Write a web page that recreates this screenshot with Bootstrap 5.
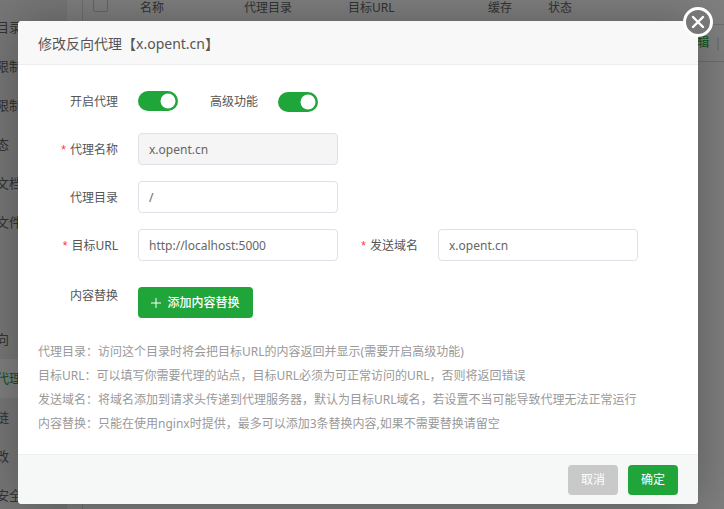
<!DOCTYPE html>
<html lang="zh">
<head>
<meta charset="utf-8">
<title>修改反向代理</title>
<link rel="stylesheet" href="https://cdn.jsdelivr.net/npm/bootstrap@5.3.0/dist/css/bootstrap.min.css">
<style>
html,body{height:509px;overflow:hidden;background:#fff}
body{font:12px/1.5 "Noto Sans","Noto Sans CJK SC",sans-serif;color:#666}
.page-shell{height:509px;overflow:hidden}
.side-menu{width:97px;margin-left:-30px;padding-top:8px;background:#eee;flex:none;font-size:13px}
.side-item{height:39px;line-height:39px;white-space:nowrap}
.side-item.on{background:#fff;color:#20a53a}
.side-band{width:16px;flex:none;background:#fff;border-right:1px solid #ddd}
.site-table{table-layout:fixed;width:641px;margin:-8px 0 0;color:#666;--bs-table-bg:transparent}
.site-table td,.site-table th{font-weight:400;padding:0 0 0 10px;vertical-align:middle;border-bottom:1px solid #ddd;white-space:nowrap;overflow:hidden}
.site-table thead th{height:32px}
.site-table tbody td{height:37px}
.fake-check{display:block;width:15px;height:15px;border:1px solid #ccc;border-radius:2px;margin-top:-6px}
.row-ops{color:#20a53a;text-align:right;padding-right:3px!important}
.ops-sep{color:#ccc;margin-left:2px}
.veil{background:rgba(0,0,0,.5);z-index:10}
.dlg{left:18px;top:21px;width:680px;height:483px;z-index:20;background:#fff;border:0;border-radius:4px;box-shadow:1px 1px 50px rgba(0,0,0,.3)}
.dlg .modal-header{height:44px;flex:none;padding:0 20px;background:#f8f8f8;border-bottom:1px solid #eee;border-radius:4px 4px 0 0}
.dlg-title{font-size:14px;font-weight:400;color:#555;margin:0;line-height:1.5;position:relative;top:1px}
.dlg .modal-body{padding:20px 0 0}
.dlg .modal-footer{height:50px;flex:none;padding:0 20px 0 0;background:#f6f8f8;border-top:1px solid #eee;border-radius:0 0 4px 4px;gap:10px}
.dlg .modal-footer>*{margin:0}
.f-row{margin-bottom:16px;min-height:32px}
.f-label{width:100px;flex:none;text-align:right;color:#555;margin-right:20px;line-height:18px;padding-top:2px}
.f-label.next{width:80px;margin-right:20px}
.add-row .f-label{padding-top:0}
.req{color:#f33;margin-right:4px;font-family:"Liberation Sans",sans-serif}
.f-input{width:200px;height:32px;font-size:12px;line-height:32px;padding:2px 10px 0;color:#666;border:1px solid #e0e0e8;border-radius:4px;box-shadow:none;font-family:inherit}
.f-input:disabled,.f-input[readonly]{background:#f5f5f5}
.f-switch{padding:0;margin:0;min-height:0;display:flex}
.f-switch.lower{margin-top:2px}
.f-switch .form-check-input{width:40px;height:20px;margin:0;float:none;background-color:#20a53a;border:0;border-radius:10px}
.btn-bt{background:#20a53a;color:#fff;border:0;border-radius:4px;font-size:12px;line-height:1}
.btn-bt:hover{background:#20a53a;color:#fff}
.btn-add{width:115px;height:31px;padding:0;gap:6px;font-weight:500}
.add-row{margin-top:26px}
.btn-dlg{width:50px;height:30px;padding:0}
.btn-mute{background:#c9c9c9}
.btn-mute:hover{background:#c9c9c9}
.tips{margin:22px 0 0 20px;padding:0;list-style:none;color:#999}
.tips li{line-height:24px;white-space:nowrap}
.close-x{left:683px;top:7px;width:30px;height:30px;z-index:30;padding:0;border:0;background:none}
</style>
</head>
<body>
<div class="page-shell d-flex position-relative">
  <nav class="side-menu">
    <div class="side-item">网站目录</div>
    <div class="side-item">访问限制</div>
    <div class="side-item">流量限制</div>
    <div class="side-item">伪静态</div>
    <div class="side-item">默认文档</div>
    <div class="side-item">配置文件</div>
    <div class="side-item">SSL</div>
    <div class="side-item">PHP</div>
    <div class="side-item">重定向</div>
    <div class="side-item on">反向代理</div>
    <div class="side-item">防盗链</div>
    <div class="side-item">防篡改</div>
    <div class="side-item">网站安全</div>
  </nav>
  <div class="side-band"></div>
  <div class="flex-grow-1">
    <table class="table site-table">
      <colgroup><col style="width:47px"><col style="width:104px"><col style="width:104px"><col style="width:140px"><col style="width:60px"><col style="width:60px"><col></colgroup>
      <thead>
        <tr><th><span class="fake-check"></span></th><th>名称</th><th>代理目录</th><th>目标URL</th><th>缓存</th><th>状态</th><th></th></tr>
      </thead>
      <tbody>
        <tr><td></td><td>x.opent.cn</td><td>/</td><td>http://localhost:5000</td><td>已关闭</td><td>运行中</td><td class="row-ops">编辑 <span class="ops-sep">|</span></td></tr>
      </tbody>
    </table>
  </div>

  <div class="veil position-absolute top-0 start-0 w-100 h-100"></div>

  <div class="modal-content dlg position-absolute">
    <div class="modal-header"><h5 class="dlg-title">修改反向代理【x.opent.cn】</h5></div>
    <div class="modal-body">
      <div class="f-row d-flex align-items-center">
        <label class="f-label">开启代理</label>
        <div class="form-check form-switch f-switch"><input class="form-check-input" type="checkbox" checked></div>
        <label class="f-label next">高级功能</label>
        <div class="form-check form-switch f-switch lower"><input class="form-check-input" type="checkbox" checked></div>
      </div>
      <div class="f-row d-flex align-items-center">
        <label class="f-label"><span class="req">*</span>代理名称</label>
        <input class="form-control f-input" value="x.opent.cn" readonly>
      </div>
      <div class="f-row d-flex align-items-center">
        <label class="f-label">代理目录</label>
        <input class="form-control f-input" value="/">
      </div>
      <div class="f-row d-flex align-items-center">
        <label class="f-label"><span class="req">*</span>目标URL</label>
        <input class="form-control f-input" value="http://localhost:5000">
        <label class="f-label next"><span class="req">*</span>发送域名</label>
        <input class="form-control f-input" value="x.opent.cn">
      </div>
      <div class="d-flex align-items-start add-row">
        <label class="f-label">内容替换</label>
        <button type="button" class="btn btn-bt btn-add d-flex align-items-center justify-content-center">
          <svg width="10" height="10" viewBox="0 0 10 10" aria-hidden="true"><path d="M5 0v10M0 5h10" stroke="#fff" stroke-width="1" fill="none"/></svg>
          <span>添加内容替换</span>
        </button>
      </div>
      <ul class="tips">
        <li>代理目录：访问这个目录时将会把目标URL的内容返回并显示(需要开启高级功能)</li>
        <li>目标URL：可以填写你需要代理的站点，目标URL必须为可正常访问的URL，否则将返回错误</li>
        <li>发送域名：将域名添加到请求头传递到代理服务器，默认为目标URL域名，若设置不当可能导致代理无法正常运行</li>
        <li>内容替换：只能在使用nginx时提供，最多可以添加3条替换内容,如果不需要替换请留空</li>
      </ul>
    </div>
    <div class="modal-footer">
      <button type="button" class="btn btn-bt btn-dlg btn-mute">取消</button>
      <button type="button" class="btn btn-bt btn-dlg">确定</button>
    </div>
  </div>

  <button type="button" class="close-x position-absolute" aria-label="关闭">
    <svg width="30" height="30" viewBox="0 0 30 30" class="d-block"><circle cx="15" cy="15" r="13.5" fill="#777" stroke="#fff" stroke-width="3"/><path d="M10 10l10 10M20 10l-10 10" stroke="#fff" stroke-width="2.4" stroke-linecap="round"/></svg>
  </button>
</div>
</body>
</html>
